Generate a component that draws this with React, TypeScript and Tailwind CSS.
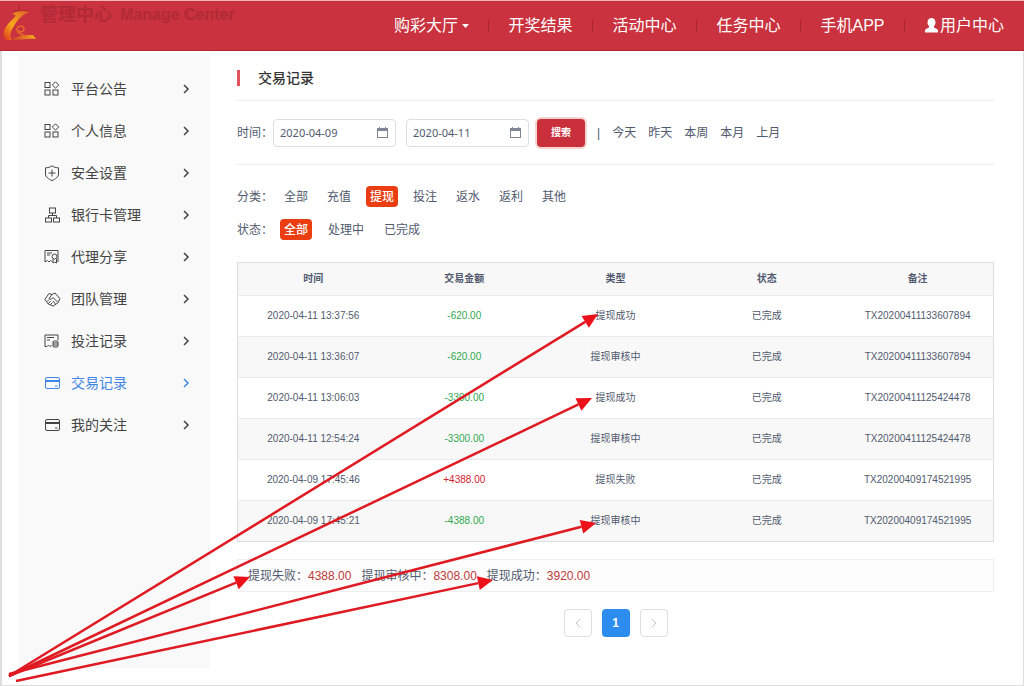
import React from "react";

type IconName = "grid" | "shield" | "org" | "agent" | "team" | "bets" | "card";

function MenuIcon({ name }: { name: IconName }) {
  const shapes: Record<IconName, React.ReactNode> = {
    grid: (
      <>
        <rect x="1" y="1.5" width="5" height="5" />
        <path d="M11.5 0.8l3.2 3.2-3.2 3.2L8.3 4z" />
        <rect x="1" y="9" width="5" height="5" />
        <rect x="9" y="9" width="5" height="5" />
      </>
    ),
    shield: (
      <>
        <path d="M8 0.8C6 2.3 4 2.7 1.5 2.8V9c0 3 3 5 6.5 6.6C11.500 14 14.500 12 14.500 9V2.800C12 2.700 10 2.300 8 0.800z" />
        <path d="M4.500 8h7M8 4.500v7" />
      </>
    ),
    org: (
      <>
        <rect x="5.500" y="1" width="6" height="5" />
        <path d="M8.500 6v2.500M4.500 11V8.500h8V11" />
        <rect x="1.500" y="11" width="6" height="4" />
        <rect x="9.500" y="11" width="6" height="4" />
      </>
    ),
    agent: (
      <>
        <path d="M8 12.500L6.500 11.500 5 13 3.500 11.500 1 13V1.500h13V13" />
        <path d="M3 4h5M3 6h3" />
        <circle cx="10.500" cy="7.500" r="2.500" />
        <path d="M9 10v4l1.500-1 2 1v-4" />
      </>
    ),
    team: (
      <>
        <path d="M0.800 8.500L5 2.500l3 1 3-1.500 4.800 5.500-1.500 4-5 3.500-5-2z" />
        <path d="M8 3.500L5 7.500c1.500 1.500 3 .5 4-1l4.500 4.500M3 10.500l2-2M4.500 12.500l2-2.500M6.500 13.500l2-2M9 10l2.500 3" />
      </>
    ),
    bets: (
      <>
        <path d="M7.500 12.500L6 13.500 4.500 12 3 13.500 1 13.500V2h13v5" />
        <path d="M3 4.500h7M3 7h3" />
        <rect x="9" y="8" width="5" height="6" rx="1" />
        <path d="M9 10h5M9 12h5" />
      </>
    ),
    card: (
      <>
        <rect x="1.500" y="2.500" width="14" height="11" rx="1.500" />
        <path d="M1.500 5.500h14M1.500 6.500h14M11 11h2.500" />
      </>
    ),
  };
  return (
    <svg className="h-4 w-[17px] shrink-0" viewBox="0 0 17 16" fill="none" stroke="currentColor" strokeWidth="1" aria-hidden="true">
      {shapes[name]}
    </svg>
  );
}

const menu: { label: string; icon: IconName; active?: boolean }[] = [
  { label: "平台公告", icon: "grid" },
  { label: "个人信息", icon: "grid" },
  { label: "安全设置", icon: "shield" },
  { label: "银行卡管理", icon: "org" },
  { label: "代理分享", icon: "agent" },
  { label: "团队管理", icon: "team" },
  { label: "投注记录", icon: "bets" },
  { label: "交易记录", icon: "card", active: true },
  { label: "我的关注", icon: "card" },
];

const rows = [
  ["2020-04-11 13:37:56", "-620.00", "提现成功", "已完成", "TX20200411133607894"],
  ["2020-04-11 13:36:07", "-620.00", "提现审核中", "已完成", "TX20200411133607894"],
  ["2020-04-11 13:06:03", "-3300.00", "提现成功", "已完成", "TX20200411125424478"],
  ["2020-04-11 12:54:24", "-3300.00", "提现审核中", "已完成", "TX20200411125424478"],
  ["2020-04-09 17:45:46", "+4388.00", "提现失败", "已完成", "TX20200409174521995"],
  ["2020-04-09 17:45:21", "-4388.00", "提现审核中", "已完成", "TX20200409174521995"],
];

const totals = [
  ["提现失败：", "4388.00"],
  ["提现审核中：", "8308.00"],
  ["提现成功：", "3920.00"],
];

const arrows = [
  [9, 676, 598, 314],
  [9, 676, 592, 398],
  [9, 676, 250, 577],
  [9, 674, 596, 523],
  [16, 681, 493, 580],
];

function Arrow({ from }: { from: number[] }) {
  const [x1, y1, x2, y2] = from;
  const length = Math.hypot(x2 - x1, y2 - y1);
  const ux = (x2 - x1) / length;
  const uy = (y2 - y1) / length;
  const bx = x2 - ux * 15;
  const by = y2 - uy * 15;
  return (
    <g>
      <line x1={x1} y1={y1} x2={bx} y2={by} stroke="#df1a22" strokeWidth="2.500" />
      <polygon
        fill="#ec1119"
        points={`${x2},${y2} ${bx - uy * 7},${by + ux * 7} ${bx + uy * 7},${by - ux * 7}`}
      />
    </g>
  );
}

function Chevron({ left = false, className }: { left?: boolean; className: string }) {
  return (
    <svg className={className} viewBox="0 0 8 10" fill="none" stroke="currentColor" aria-hidden="true">
      <path d={left ? "M6 1L2 5l4 4" : "M2 1l4 4-4 4"} />
    </svg>
  );
}

function DateField({ id, label, value }: { id: string; label: string; value: string }) {
  return (
    <div className="relative">
      <input
        id={id}
        type="text"
        aria-label={label}
        defaultValue={value}
        className="block h-7 w-[123px] rounded border border-[#dcdee2] bg-white px-1.5 font-['Noto_Sans'] text-[11px] text-[#515a6e] outline-none"
      />
      <svg className="pointer-events-none absolute top-2 right-2 h-[11px] w-[11px] text-[#808695]" viewBox="0 0 11 11" fill="none" stroke="currentColor" aria-hidden="true">
        <rect x="0.500" y="1.500" width="10" height="9" />
        <path d="M0.500 2.500h10M0.500 3.500h10M2.500 0v2M8.500 0v2" />
      </svg>
    </div>
  );
}

function Options({ title, items, active, gap }: { title: string; items: string[]; active: string; gap: string }) {
  return (
    <div className="flex items-center">
      <span className="w-[43px]">{title}</span>
      <div className={`flex ${gap}`}>
        {items.map((item) => (
          <button
            key={item}
            type="button"
            className={`h-[21px] rounded-sm px-1 whitespace-nowrap ${item === active ? "bg-[#ea3d12] font-medium text-white" : ""}`}
          >
            {item}
          </button>
        ))}
      </div>
    </div>
  );
}

export default function App() {
  const nav = ["购彩大厅", "开奖结果", "活动中心", "任务中心", "手机APP", "用户中心"];
  return (
    <div className="relative flex min-h-screen flex-col overflow-hidden bg-white font-['Liberation_Sans','Noto_Sans_CJK_SC',sans-serif] text-xs text-[#515a6e]">
      <header className="flex h-[51px] shrink-0 border-t border-b border-t-[#f0b0b5] border-b-[#b32430] bg-[#c9323e] text-white">
        <a href="#home" aria-label="首页" className="w-10 pt-1 pl-0.5">
          <svg className="h-10 w-9" viewBox="0 -4 36 40" aria-hidden="true">
            <defs>
              <linearGradient id="sweep" x1="0" y1="1" x2="1" y2="0">
                <stop offset="0" stopColor="#e0341f" />
                <stop offset="0.400" stopColor="#f5a51c" />
                <stop offset="0.600" stopColor="#f0961f" />
                <stop offset="1" stopColor="#d9552a" />
              </linearGradient>
              <linearGradient id="ribbon" x1="0" y1="0" x2="1" y2="0">
                <stop offset="0" stopColor="#cf3a2c" />
                <stop offset="1" stopColor="#f7b21e" />
              </linearGradient>
            </defs>
            <path stroke="#b22a36" strokeWidth="1.500" d="M17-4v14M11 2h15" />
            <path fill="url(#sweep)" d="M28 3C21 1 14 2 10 5c3 0 4 1 3 3C7 13 2 19 1.500 25c0 4 2 6 5 6h4C7 28 8 23 12 17 16 10 21 5 28 3z" />
            <path fill="url(#ribbon)" d="M9 31c5-4 12-5 22-5l3 4c-8-1-15 1-25 1z" />
            <path fill="none" stroke="#e5692a" strokeWidth="1.500" d="M14 21c2-5 8-5 8-1 0 3-4 4-5 1M15 21c1 4 5 5 10 6" />
          </svg>
        </a>
        <div className="flex h-7 items-center gap-2 font-bold whitespace-nowrap text-[#b22a36]">
          <span className="text-lg">管理中心</span>
          <span className="text-base">Manage Center</span>
        </div>
        <nav className="ml-auto flex items-center text-base leading-6">
          {nav.map((item, i) => (
            <React.Fragment key={item}>
              {i > 0 && <span className="h-3 w-px bg-[#a82430]" />}
              <a
                href={`#nav-${i}`}
                className={`flex items-center justify-center whitespace-nowrap ${i === 5 ? "w-[119px]" : i === 0 ? "w-[113px]" : "w-[103px]"}`}
              >
                {i === 5 && (
                  <svg className="mr-0.5 h-[15px] w-[13px]" viewBox="0 0 13 15" fill="currentColor" aria-hidden="true">
                    <ellipse cx="6.500" cy="4.500" rx="4" ry="4.500" />
                    <path d="M4 8h5v1.500l3 1.500c1 .5 1 1.500 1 3.500H0c0-2 0-3 1-3.500l3-1.500z" />
                  </svg>
                )}
                {item}
                {i === 0 && (
                  <svg className="ml-1 h-1 w-[7px]" viewBox="0 0 7 4" fill="currentColor" aria-hidden="true">
                    <path d="M0 0h7L3.500 4z" />
                  </svg>
                )}
              </a>
            </React.Fragment>
          ))}
        </nav>
      </header>

      <div className="flex grow border-r border-b border-l-2 border-[#dedede] pt-1 pr-[29px] pb-[17px] pl-4">
        <aside className="w-48 shrink-0 bg-[#f9f9f9] pt-[13px]">
          <nav>
            {menu.map((item) => (
              <a
                key={item.label}
                href={`#${item.label}`}
                className={`flex h-[42px] items-center pr-5 pl-[26px] text-sm ${item.active ? "text-[#3f86e6]" : "text-[#444]"}`}
              >
                <MenuIcon name={item.icon} />
                <span className="ml-2.5 grow">{item.label}</span>
                <Chevron className="h-2.5 w-2 stroke-[1.5]" />
              </a>
            ))}
          </nav>
        </aside>

        <main className="ml-[27px] min-w-0 grow">
          <h1 className="flex h-[46px] items-center border-b border-[#e8eaec] text-sm font-medium text-[#333]">
            <span className="mr-[18px] h-4 w-[3px] bg-[#e0525e]" />
            交易记录
          </h1>

          <div className="flex h-16 items-center border-b border-[#e8eaec]">
            <label htmlFor="from" className="w-9 whitespace-nowrap">时间：</label>
            <div className="flex gap-2.5">
              <DateField id="from" label="开始日期" value="2020-04-09" />
              <DateField id="to" label="结束日期" value="2020-04-11" />
            </div>
            <button type="button" className="ml-2 h-7 w-12 rounded bg-[#c9303c] text-[10px] font-bold text-white ring-2 ring-[#f9d5d0]">
              搜索
            </button>
            <span className="ml-3">|</span>
            <div className="ml-3 flex gap-3">
              {["今天", "昨天", "本周", "本月", "上月"].map((day) => (
                <button key={day} type="button">{day}</button>
              ))}
            </div>
          </div>

          <div className="flex flex-col gap-3 pt-[21px] whitespace-nowrap">
            <Options title="分类：" items={["全部", "充值", "提现", "投注", "返水", "返利", "其他"]} active="提现" gap="gap-[11px]" />
            <Options title="状态：" items={["全部", "处理中", "已完成"]} active="全部" gap="gap-3" />
          </div>

          <table className="mt-[22px] w-full table-fixed border border-[#dcdee2] text-center text-[10px]">
            <thead>
              <tr className="h-[33px] bg-[#f8f8f9]">
                {["时间", "交易金额", "类型", "状态", "备注"].map((head) => (
                  <th key={head} scope="col" className="p-0 font-bold">{head}</th>
                ))}
              </tr>
            </thead>
            <tbody>
              {rows.map((row, r) => (
                <tr key={r} className="h-[41px] border-t border-[#e8eaec] even:bg-[#f8f8f8]">
                  {row.map((cell, c) => (
                    <td
                      key={c}
                      className={`p-0 ${c !== 1 ? "" : cell.startsWith("+") ? "text-[#d2202f]" : "text-[#2fa84f]"}`}
                    >
                      {cell}
                    </td>
                  ))}
                </tr>
              ))}
            </tbody>
          </table>

          <div className="mt-[17px] flex h-[33px] items-center gap-2.5 border border-[#eeeeee] bg-[#fcfcfc] px-2.5">
            {totals.map(([label, value]) => (
              <span key={label} className="whitespace-nowrap">
                {label}
                <span className="text-[#c03a3a]">{value}</span>
              </span>
            ))}
          </div>

          <div className="mt-[17px] flex justify-center gap-2.5">
            <button type="button" aria-label="上一页" className="flex h-7 w-7 items-center justify-center rounded border border-[#dcdee2] text-[#c5c8ce]">
              <Chevron left className="h-2.5 w-2" />
            </button>
            <button type="button" className="h-7 w-7 rounded bg-[#2d8cf0] text-xs font-bold text-white">1</button>
            <button type="button" aria-label="下一页" className="flex h-7 w-7 items-center justify-center rounded border border-[#dcdee2] text-[#c5c8ce]">
              <Chevron className="h-2.5 w-2" />
            </button>
          </div>
        </main>
      </div>

      <svg className="pointer-events-none absolute top-0 left-0 h-[686px] w-[1024px]" viewBox="0 0 1024 686" aria-hidden="true">
        {arrows.map((arrow) => (
          <Arrow key={arrow.join("-")} from={arrow} />
        ))}
      </svg>
    </div>
  );
}
